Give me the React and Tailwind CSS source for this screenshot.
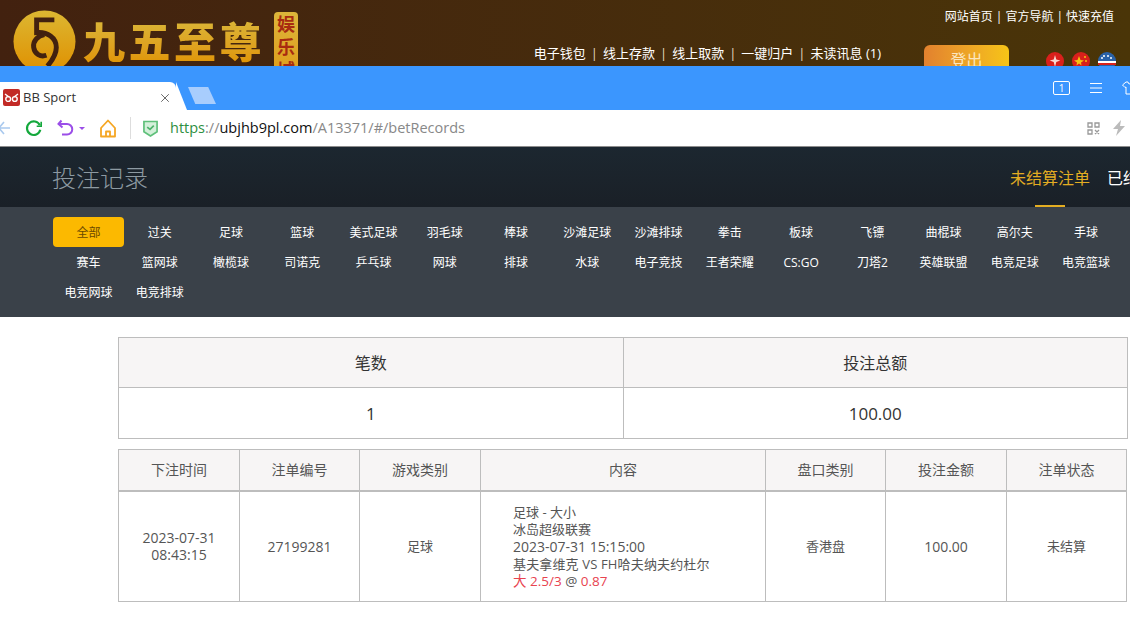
import { X } from "lucide-react";

const rowOne = ["全部", "过关", "足球", "篮球", "美式足球", "羽毛球", "棒球", "沙滩足球", "沙滩排球", "拳击", "板球", "飞镖", "曲棍球", "高尔夫", "手球", "冰球"];
const rowTwo = ["赛车", "篮网球", "橄榄球", "司诺克", "乒乓球", "网球", "排球", "水球", "电子竞技", "王者荣耀", "CS:GO", "刀塔2", "英雄联盟", "电竞足球", "电竞篮球", ""];
const rowThree = ["电竞网球", "电竞排球"];
const sports = [...rowOne, ...rowTwo, ...rowThree];

const headers = [
  { label: "下注时间", width: "w-[121px]" },
  { label: "注单编号", width: "w-[120px]" },
  { label: "游戏类别", width: "w-[121px]" },
  { label: "内容", width: "w-[285px]" },
  { label: "盘口类别", width: "w-[120px]" },
  { label: "投注金额", width: "w-[121px]" },
  { label: "注单状态", width: "w-[120px]" },
];

const Sep = () => <span className="mx-[5px] text-[#e8dcc0]">|</span>;

const Logo = () => (
  <svg width="63" height="63" viewBox="0 0 64 64" className="shrink-0">
    <defs>
      <linearGradient id="coin" x1="0" y1="0" x2="0" y2="1">
        <stop offset="0" stopColor="#dcb732" />
        <stop offset="1" stopColor="#e09000" />
      </linearGradient>
    </defs>
    <circle cx="32" cy="32" r="31.500" fill="url(#coin)" />
    <path d="M42 10H24v13c11-1 20 5 20 15 0 7-4 13-9 19" fill="none" stroke="#42210f" strokeWidth="5" />
    <path d="M32 25c-7 1-12 7-11 13 1 7 7 10 13 8" fill="none" stroke="#42210f" strokeWidth="5" />
  </svg>
);

const Flag = ({ color, children }) => (
  <svg width="18" height="18" viewBox="0 0 18 18">
    <circle cx="9" cy="9" r="9" fill={color} />
    {children}
  </svg>
);

const App = () => {
  return (
    <div className="w-[1130px] h-[633px] overflow-hidden bg-white font-['Open_Sans','Noto_Sans_CJK_SC',sans-serif]">
      {/* site banner, cut by the browser window */}
      <div className="h-[66px] overflow-hidden bg-gradient-to-r from-[#42210f] to-[#4a3508] flex justify-between">
        <div className="pl-[13px] pt-[10px] flex items-start">
          <Logo />
          <span className="ml-[7px] mt-[5px] w-[186px] text-[42px] leading-[50px] tracking-[3.500px] font-black text-transparent bg-clip-text bg-gradient-to-b from-[#d9b93a] to-[#e09400] font-['Noto_Sans_CJK_SC',serif]">九五至尊</span>
          <div className="ml-[5px] mt-[2px] w-[24px] h-[70px] rounded bg-gradient-to-b from-[#dcb53a] to-[#e09a10] text-[#a82b10] text-[18px] leading-[23px] font-bold text-center font-['Noto_Sans_CJK_SC',serif]">
            娱乐城
          </div>
        </div>
        <div className="pr-[16px] pt-[8px] text-white text-[12px] flex flex-col items-end">
          <div className="leading-[18px]">
            网站首页<span className="mx-[3px]">|</span>官方导航<span className="mx-[3px]">|</span>快速充值
          </div>
          <div className="mt-[11px] flex items-start">
            <div className="leading-[18px] text-[13px] mt-[7px]">
              电子钱包<Sep />线上存款<Sep />线上取款<Sep />一键归户<Sep />未读讯息 (1)
            </div>
            <div className="ml-[43px] mt-[8px] w-[85px] h-[30px] rounded-md bg-gradient-to-r from-[#e2812e] to-[#f6c416] text-center text-[16px] leading-[30px] text-[#fbe6c0]">
              登出
            </div>
            <div className="ml-[37px] mt-[15px] mr-[-2px] flex gap-[8px]">
              <Flag color="#d9201c"><path d="M9 3l1.300 4.500 4 1-4 1.500L9 15l-1.300-5-4-1.500 4-1z" fill="#f8d8d0" /></Flag>
              <Flag color="#d9201c"><path d="M7 4l1.500 4 3.500.5-3 2 .5 3-2.500-2-2.500 2 .5-3-3-2 3.500-.5z" fill="#f5c211" /><circle cx="13" cy="5" r="1" fill="#f5c211" /><circle cx="14" cy="9" r="1" fill="#f5c211" /></Flag>
              <Flag color="#2a62a8"><circle cx="6" cy="4" r="1" fill="#fff" /><circle cx="10" cy="4" r="1" fill="#fff" /><circle cx="13" cy="6" r="1" fill="#fff" /><circle cx="4" cy="6" r="1" fill="#fff" /><rect x="0" y="9" width="18" height="2" fill="#fff" /><rect x="0" y="11" width="18" height="2" fill="#d9201c" /></Flag>
            </div>
          </div>
        </div>
      </div>

      {/* browser chrome */}
      <div className="h-[44px] bg-[#3b96fe] flex items-end justify-between">
        <div className="flex items-end">
          <div className="w-[176px] h-[28px] bg-white rounded-tr-md flex items-center pt-[3px] pl-[3px] pr-[4px] text-[13px] text-[#333]">
            <svg width="17" height="17" viewBox="0 0 17 17" className="shrink-0">
              <rect width="17" height="17" rx="2" fill="#c22a26" />
              <path d="M2 5l4 3M15 5l-4 3" stroke="#fff" strokeWidth="1.400" />
              <circle cx="5.200" cy="10" r="2.400" fill="none" stroke="#fff" strokeWidth="1.400" />
              <circle cx="11.800" cy="10" r="2.400" fill="none" stroke="#fff" strokeWidth="1.400" />
            </svg>
            <span className="ml-[3px] flex-1">BB Sport</span>
            <X size={14} strokeWidth={1.500} className="text-[#555]" />
          </div>
          <div className="w-0 h-0 border-b-[28px] border-b-white border-r-[11px] border-r-transparent" />
          <div className="ml-px mb-[6px] w-[28px] h-[17px] bg-[#a8cdfd] [clip-path:polygon(0_0,72%_0,100%_100%,26%_100%)]" />
        </div>
        <div className="h-full flex items-center gap-[20px] text-white mr-[-8px]">
          <span className="w-[17px] h-[14px] border border-white rounded-[2px] text-[10px] leading-[12px] text-center">1</span>
          <svg width="12" height="10" viewBox="0 0 12 10" stroke="#fff"><path d="M0 .5h12M0 5h12M0 9.500h12" /></svg>
          <svg width="16" height="14" viewBox="0 0 16 14" fill="none" stroke="#fff"><path d="M4 1L.5 4 3 6.500 4 6v7h8V6l1 .5L15.500 4 12 1h-2a2 2 0 0 1-4 0z" /></svg>
        </div>
      </div>
      <div className="h-[37px] bg-white border-b border-b-[#8c8c8c] flex items-center justify-between">
        <div className="flex items-center">
          <svg width="12" height="14" viewBox="0 0 12 14" fill="none" stroke="#a9c9ee" strokeWidth="1.600" className="-ml-[2px]"><path d="M6 1L1 7l5 6M1 7h11" /></svg>
          <svg width="18" height="18" viewBox="0 0 20 20" fill="none" stroke="#14a83c" strokeWidth="2.400" className="ml-[15px]">
            <path d="M16.500 7A7.500 7.500 0 1 0 17 12" />
            <path d="M13 8h5V3" strokeWidth="1.800" />
          </svg>
          <svg width="17" height="18" viewBox="0 0 17 18" fill="none" stroke="#9b4ee8" strokeWidth="2" className="ml-[14px]">
            <path d="M4.500 1.500L1.500 5l4 3.500M1.500 5H10a5 5 0 0 1 0 10.500H5" />
          </svg>
          <span className="ml-[5px] w-0 h-0 border-x-[3px] border-x-transparent border-t-[3px] border-t-[#9b4ee8]" />
          <svg width="16" height="19" viewBox="0 0 16 19" fill="none" stroke="#f5a623" strokeWidth="1.800" className="ml-[15px]">
            <path d="M8 1.500L1 9v8.500h14V9zM6 17.500v-5h4v5" strokeLinejoin="round" />
          </svg>
          <div className="ml-[14px] w-px h-[22px] bg-[#ddd]" />
          <svg width="15" height="17" viewBox="0 0 16 18" className="ml-[12px]">
            <path d="M1 1.500h14v11L8 17l-7-4.500z" fill="#d4f0da" stroke="#5fc07a" strokeWidth="1.800" />
            <path d="M4.500 7.500l3 2.500 4-4" fill="none" stroke="#4fb36c" strokeWidth="1.800" />
          </svg>
          <div className="ml-[12px] text-[14.500px] leading-[20px] text-[#888]">
            <span className="text-[#2f8f3f]">https</span>://<span className="text-[#111]">ubjhb9pl.com</span>/A13371/#/betRecords
          </div>
        </div>
        <div className="flex items-center gap-[13px] mr-[5px]">
          <svg width="13" height="13" viewBox="0 0 13 13" fill="none" stroke="#999" strokeWidth="1.300">
            <path d="M1 1h4v4H1zM8 1h4v4H8zM1 8h4v4H1zM8 8l4 4M12 8l-4 4" />
          </svg>
          <svg width="12" height="16" viewBox="0 0 12 16" fill="#bbb"><path d="M8 0L0 9h5l-2 7 9-10H7z" /></svg>
        </div>
      </div>

      {/* page title + tabs */}
      <div className="h-[60px] bg-gradient-to-b from-[#1c2730] to-[#1a2027] flex items-start justify-between overflow-hidden">
        <h1 className="ml-[52px] mt-[13px] text-[24px] leading-[36px] font-light text-[#8d9aa2]">投注记录</h1>
        <div className="flex flex-none w-[180px] mr-[-60px] text-[16px] whitespace-nowrap">
          <div className="flex flex-col items-center">
            <span className="mt-[21px] leading-[20px] text-[#e3ad22]">未结算注单</span>
            <span className="mt-[17px] w-[30px] h-[2px] bg-[#e3ad22]" />
          </div>
          <span className="ml-[17px] mt-[21px] leading-[20px] text-white">已结算注单</span>
        </div>
      </div>

      {/* sport filter */}
      <div className="h-[110px] bg-[#3a4149] pl-[53px] pt-[10px]">
        <div className="grid grid-cols-[repeat(16,71.250px)] auto-rows-[30px] text-[12px] text-white">
          {sports.map((s, i) => (
            <div key={i} className="flex items-center justify-center">
              {i === 0 ? (
                <span className="w-[71px] h-[30px] pt-[1px] rounded bg-[#fcb900] text-[#6b4a00] flex items-center justify-center">{s}</span>
              ) : (
                <span className="pt-[2px]">{s}</span>
              )}
            </div>
          ))}
        </div>
      </div>

      {/* summary */}
      <div className="pl-[118px] pt-[20px]">
        <table className="w-[1010px] table-fixed border-collapse border border-[#bdbdbd] text-[#333]">
          <tbody>
            <tr className="h-[50px] bg-[#f7f5f5] text-[16px]">
              <td className="border border-[#bdbdbd] text-center">笔数</td>
              <td className="border border-[#bdbdbd] text-center">投注总额</td>
            </tr>
            <tr className="h-[51px] text-[17px]">
              <td className="border border-[#bdbdbd] text-center pt-[2px]">1</td>
              <td className="border border-[#bdbdbd] text-center pt-[2px]">100.00</td>
            </tr>
          </tbody>
        </table>

        <table className="mt-[10px] w-[1008px] table-fixed border-collapse border border-[#bdbdbd] text-[14px] text-[#555]">
          <thead>
            <tr className="h-[41px] bg-[#f7f5f5] border-b-2 border-b-[#bdbdbd]">
              {headers.map((h) => (
                <th key={h.label} className={`${h.width} border-r border-r-[#bdbdbd] font-normal text-center`}>{h.label}</th>
              ))}
            </tr>
          </thead>
          <tbody>
            <tr className="h-[111px] text-center">
              <td className="border-r border-r-[#bdbdbd] leading-[17px]">2023-07-31<br />08:43:15</td>
              <td className="border-r border-r-[#bdbdbd]">27199281</td>
              <td className="border-r border-r-[#bdbdbd] text-[13px]">足球</td>
              <td className="border-r border-r-[#bdbdbd] text-left pl-[32px] pt-[2px] text-[13px] leading-[17px]">
                足球 - 大小<br />
                冰岛超级联赛<br />
                <span className="text-[14px]">2023-07-31 15:15:00</span><br />
                <span className="tracking-[0.15px]">基夫拿维克 VS FH哈夫纳夫约杜尔</span><br />
                <span className="text-[13.500px]"><span className="text-[#e8434f]">大 2.5/3</span> @ <span className="text-[#e8434f]">0.87</span></span>
              </td>
              <td className="border-r border-r-[#bdbdbd] text-[13px]">香港盘</td>
              <td className="border-r border-r-[#bdbdbd]">100.00</td>
              <td className="text-[13px]">未结算</td>
            </tr>
          </tbody>
        </table>
      </div>
    </div>
  );
};

export default App;
